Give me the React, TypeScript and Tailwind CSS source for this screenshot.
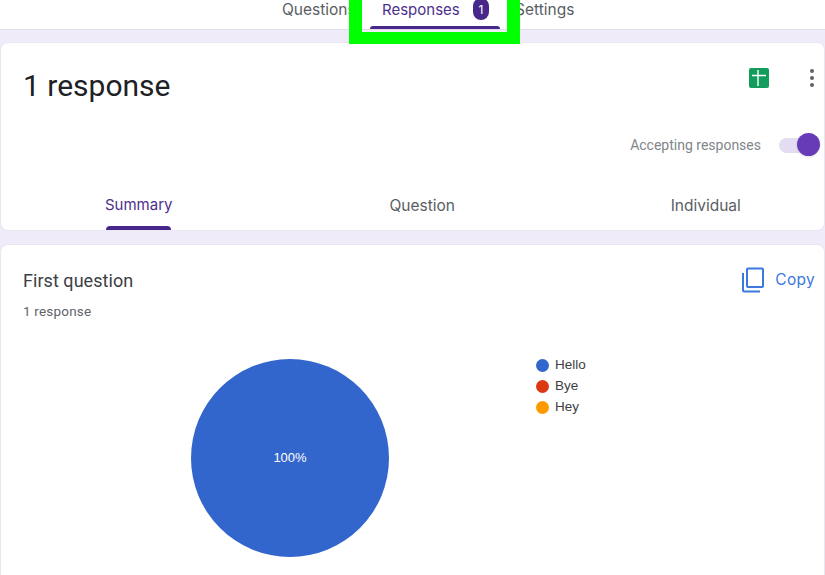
export default function App() {
  const legend = [
    ["Hello", "bg-[#3366cc]"],
    ["Bye", "bg-[#dc3912]"],
    ["Hey", "bg-[#ff9900]"],
  ];
  return (
    <div className="w-[825px] h-[575px] overflow-hidden relative bg-[#f0ebf8] font-['Roboto',sans-serif]">
      <nav className="h-[30px] bg-white border-b border-[#e0dce8] relative">
        <div className="h-full font-['Inter',sans-serif] relative w-full">
          <span className="absolute left-[282px] top-0 leading-[20px] text-[15.5px] text-[#5a5e63]">Questions</span>
          <span className="absolute left-[382px] top-0 leading-[20px] text-[15px] text-[#4d2f8c]">Responses</span>
          <span className="absolute left-[473px] top-[-2px] w-[16px] h-[22px] rounded-lg bg-[#47288a] text-white text-[12px] leading-[23px] text-center">1</span>
          <span className="absolute left-[515px] top-0 leading-[20px] text-[15.5px] text-[#5a5e63]">Settings</span>
          <div className="absolute left-[370px] top-[26px] w-[130px] h-[3px] rounded-t bg-[#47288a]" />
        </div>
      </nav>
      <div className="absolute z-10 left-[349px] top-0 w-[171px] h-[44px] border-[#00ff00] border-x-[13px] border-b-[12px]" />

      <section className="mt-[12px] h-[189px] bg-white rounded-lg border border-[#e9e5f1] relative flex flex-col overflow-hidden">
        <div className="h-[60px] flex justify-between items-start pl-[23px] pr-[9px] pt-[23px]">
          <h1 className="text-[30px] leading-[40px] text-[#202124] ml-[-1px]">1 response</h1>
          <div className="flex items-center gap-[39px] pt-[1px]">
            <svg width="22" height="22" viewBox="0 0 22 22">
              <rect x="1" y="1" width="20" height="20" rx="2" fill="#129d5c" />
              <path d="M4 8.5h14M10 3v16" stroke="#fff" strokeWidth="1.4" fill="none" />
            </svg>
            <svg width="6" height="20" viewBox="0 0 6 20">
              <circle cx="3" cy="3" r="2" fill="#5f6368" />
              <circle cx="3" cy="10" r="2" fill="#5f6368" />
              <circle cx="3" cy="17" r="2" fill="#5f6368" />
            </svg>
          </div>
        </div>
        <div className="flex justify-end items-center mt-[30px] pr-[4px] gap-[18px] h-[24px]">
          <span className="text-[14px] text-[#80868b]">Accepting responses</span>
          <div className="relative w-[41px] h-[24px] flex items-center">
            <div className="w-[34px] h-[15px] rounded-full bg-[#e3dcf2]" />
            <div className="absolute right-0 top-0 w-[23px] h-[23px] rounded-full bg-[#673ab7] shadow" />
          </div>
        </div>
        <div className="grid grid-cols-[repeat(3,283.5px)] flex-1 ml-[-4px] mt-[8px] text-[15.5px] font-['Inter',sans-serif] text-[#5a5e63]">
          <div className="relative flex justify-center pt-[29px]">
            <span className="text-[#4d2f8c] text-[15px]">Summary</span>
            <div className="absolute bottom-0 left-[109px] w-[65px] h-[4px] rounded-t bg-[#47288a]" />
          </div>
          <div className="flex justify-center pt-[29px]">Question</div>
          <div className="flex justify-center pt-[29px]">Individual</div>
        </div>
      </section>

      <section className="mt-[13px] h-[340px] bg-white rounded-t-lg border border-[#e9e5f1] pl-[22px] pr-[23px] pt-[24px] relative">
        <div className="flex justify-between items-start">
          <div>
            <h2 className="text-[18px] leading-[24px] text-[#3c4043] tracking-[0.05px]">First question</h2>
            <p className="text-[13.5px] leading-[18px] mt-[9px] text-[#5f6368] tracking-[0.2px]">1 response</p>
          </div>
          <div className="flex items-center gap-[10px] mr-[-14px] mt-[-2px]">
            <svg width="24" height="26" viewBox="0 0 24 26" fill="none" stroke="#3b78e0" strokeWidth="2">
              <rect x="6" y="1.5" width="16" height="18.5" rx="1" />
              <path d="M2 6v17.5a1 1 0 0 0 1 1h16" />
            </svg>
            <span className="text-[15.5px] tracking-[0.3px] font-['Inter',sans-serif] text-[#3b78e0]">Copy</span>
          </div>
        </div>
        <div className="flex mt-[39px]">
          <div className="relative ml-[168px] w-[198px] h-[198px] rounded-full bg-[#3366cc] flex items-center justify-center">
            <span className="text-white text-[13px] font-['Liberation_Sans',sans-serif]">100%</span>
          </div>
          <ul className="ml-[147px] mt-[-3px] flex flex-col gap-[3px] font-['Liberation_Sans',sans-serif] text-[13.5px] text-[#3c4043]">
            {legend.map(([t, c]) => (
              <li key={t} className="flex items-center gap-[6px] h-[18px]">
                <span className={`w-[13px] h-[13px] rounded-full ${c}`} />
                {t}
              </li>
            ))}
          </ul>
        </div>
      </section>
    </div>
  );
}
